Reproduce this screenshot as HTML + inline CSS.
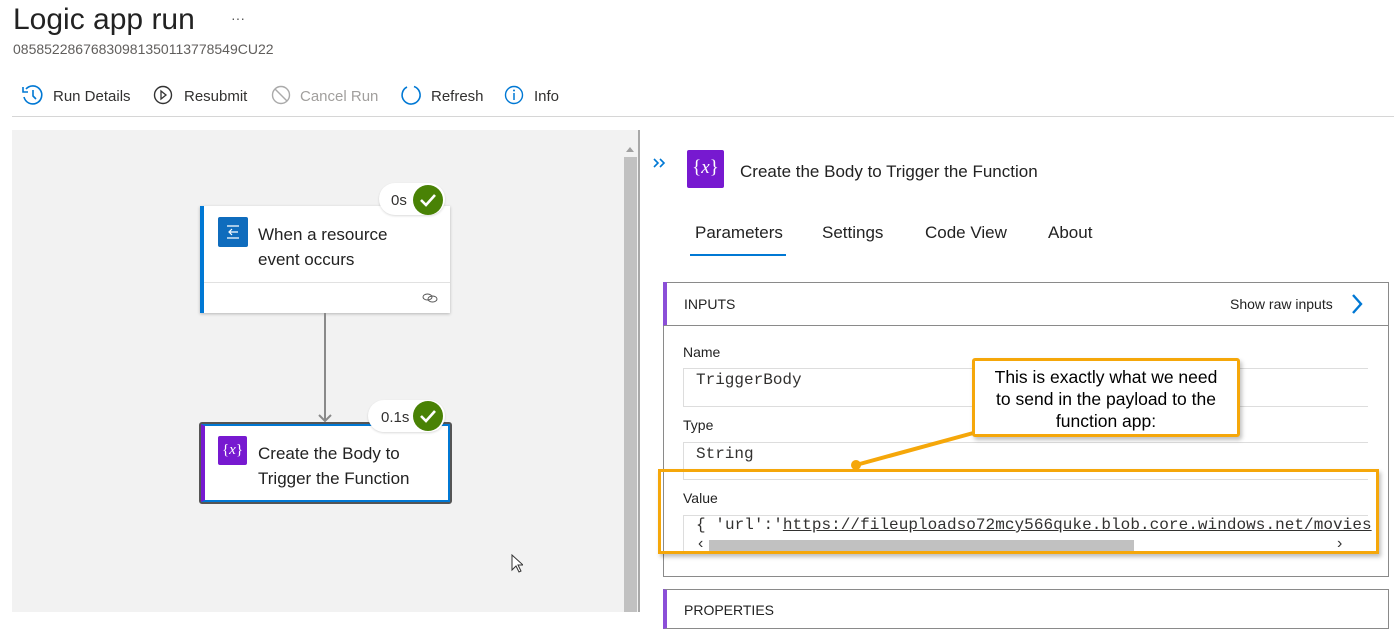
<!DOCTYPE html>
<html><head><meta charset="utf-8"><style>
*{margin:0;padding:0;box-sizing:border-box}
body{width:1394px;height:612px;overflow:hidden;background:#fff;font-family:"Liberation Sans",sans-serif;color:#323130;position:relative}
.a{position:absolute}
.mono{font-family:"Liberation Mono",monospace}
</style></head><body>
<div class="a" style="left:13px;top:3px;font-size:30px;color:#222">Logic app run</div>
<div class="a" style="left:231px;top:10px;font-size:14px;color:#555">···</div>
<div class="a" style="left:13px;top:41px;font-size:14px;color:#605e5c">08585228676830981350113778549CU22</div>

<svg class="a" style="left:20px;top:84px" width="24" height="22" viewBox="0 0 24 22"><path d="M6 5A9 9 0 1 1 4 13" fill="none" stroke="#0078d4" stroke-width="1.6"/><path d="M3 3v5h5" fill="none" stroke="#0078d4" stroke-width="1.6"/><path d="M13 6v6l3 3" fill="none" stroke="#0078d4" stroke-width="1.6"/></svg>
<div class="a" style="left:53px;top:88px;font-size:15px">Run Details</div>
<svg class="a" style="left:152px;top:84px" width="22" height="22" viewBox="0 0 22 22"><circle cx="11" cy="11" r="8.5" fill="none" stroke="#333" stroke-width="1.4"/><path d="M9 7v8l5-4z" fill="none" stroke="#333" stroke-width="1.3"/></svg>
<div class="a" style="left:184px;top:88px;font-size:15px">Resubmit</div>
<svg class="a" style="left:270px;top:84px" width="22" height="22" viewBox="0 0 22 22"><circle cx="11" cy="11" r="8.5" fill="none" stroke="#aaa" stroke-width="1.4"/><path d="M5 5l12 12" stroke="#aaa" stroke-width="1.4"/></svg>
<div class="a" style="left:300px;top:88px;font-size:15px;color:#a19f9d">Cancel Run</div>
<svg class="a" style="left:399px;top:83px" width="24" height="24" viewBox="0 0 24 24"><path d="M8 4A9 9 0 1 0 15 3.5" fill="none" stroke="#0078d4" stroke-width="1.6"/></svg>
<div class="a" style="left:431px;top:88px;font-size:15px">Refresh</div>
<svg class="a" style="left:503px;top:84px" width="22" height="22" viewBox="0 0 22 22"><circle cx="11" cy="11" r="8.5" fill="none" stroke="#0078d4" stroke-width="1.4"/><path d="M11 9v7" stroke="#0078d4" stroke-width="1.5"/><circle cx="11" cy="6.5" r="1" fill="#0078d4"/></svg>
<div class="a" style="left:534px;top:88px;font-size:15px">Info</div>
<div class="a" style="left:12px;top:116px;width:1382px;height:1px;background:#d6d6d6"></div>

<div class="a" style="left:12px;top:130px;width:626px;height:482px;background:#f2f2f2"></div>
<div class="a" style="left:624px;top:157px;width:13px;height:455px;background:#c1c1c1"></div>
<div class="a" style="left:626px;top:147px;width:0;height:0;border-left:4px solid transparent;border-right:4px solid transparent;border-bottom:5px solid #a0a0a0"></div>
<div class="a" style="left:638px;top:130px;width:2px;height:482px;background:#a8a8a8"></div>

<div class="a" style="left:200px;top:206px;width:250px;height:107px;background:#fff;border-left:4px solid #0078d4;box-shadow:0 1px 3px rgba(0,0,0,.25)"></div>
<div class="a" style="left:204px;top:282px;width:246px;height:1px;background:#e1e1e1"></div>
<div class="a" style="left:218px;top:217px;width:30px;height:30px;background:#0f6cbd;border-radius:2px"></div>
<svg class="a" style="left:218px;top:217px" width="30" height="30"><path d="M9 9h12M9 21h12M12 15h8M14 12l-3 3 3 3" fill="none" stroke="#fff" stroke-width="1.2"/></svg>
<div class="a" style="left:258px;top:222px;font-size:17px;line-height:25px;color:#222">When a resource<br>event occurs</div>
<svg class="a" style="left:422px;top:292px" width="16" height="12"><ellipse cx="5.5" cy="5" rx="4.5" ry="3" fill="none" stroke="#555"/><ellipse cx="10.5" cy="7" rx="4.5" ry="3" fill="none" stroke="#555"/></svg>
<div class="a" style="left:379px;top:183px;width:66px;height:32px;background:#fff;border-radius:16px;box-shadow:0 1px 2px rgba(0,0,0,.15)"></div>
<div class="a" style="left:391px;top:192px;font-size:15px">0s</div>
<svg class="a" style="left:412px;top:184px" width="32" height="32"><circle cx="16" cy="16" r="15" fill="#498205"/><path d="M9 16l5 5 9-10" fill="none" stroke="#fff" stroke-width="2.6"/></svg>

<div class="a" style="left:324px;top:313px;width:2px;height:107px;background:#8a8a8a"></div>
<svg class="a" style="left:318px;top:413px" width="14" height="10"><path d="M1 2l6 6 6-6" fill="none" stroke="#8a8a8a" stroke-width="2"/></svg>

<div class="a" style="left:199px;top:422px;width:253px;height:82px;background:#fff;border:2px solid #555;border-radius:3px"></div>
<div class="a" style="left:201px;top:424px;width:249px;height:78px;border:2px solid #0078d4;border-left:4px solid #7719d0"></div>
<div class="a" style="left:218px;top:436px;width:29px;height:29px;background:#7719d0;border-radius:2px;color:#fff;font-family:'Liberation Serif',serif;font-size:15px;text-align:center;line-height:28px">{<i>x</i>}</div>
<div class="a" style="left:258px;top:441px;font-size:17px;line-height:25px;color:#222">Create the Body to<br>Trigger the Function</div>
<div class="a" style="left:368px;top:400px;width:77px;height:32px;background:#fff;border-radius:16px;box-shadow:0 1px 2px rgba(0,0,0,.15)"></div>
<div class="a" style="left:381px;top:409px;font-size:15px">0.1s</div>
<svg class="a" style="left:412px;top:400px" width="32" height="32"><circle cx="16" cy="16" r="15" fill="#498205"/><path d="M9 16l5 5 9-10" fill="none" stroke="#fff" stroke-width="2.6"/></svg>
<svg class="a" style="left:511px;top:554px" width="12" height="20"><path d="M1 1v15l4-4 3 6 2-1-3-6h5z" fill="#fff" stroke="#333"/></svg>

<svg class="a" style="left:652px;top:157px" width="16" height="12"><path d="M2 2l4 4-4 4M8 2l4 4-4 4" fill="none" stroke="#0078d4" stroke-width="1.6"/></svg>
<div class="a" style="left:687px;top:150px;width:37px;height:38px;background:#7719d0;border-radius:2px;color:#fff;font-family:'Liberation Serif',serif;font-size:19px;text-align:center;line-height:36px">{<i>x</i>}</div>
<div class="a" style="left:740px;top:162px;font-size:17px;color:#222">Create the Body to Trigger the Function</div>
<div class="a" style="left:695px;top:223px;font-size:17px;color:#222">Parameters</div>
<div class="a" style="left:822px;top:223px;font-size:17px;color:#222">Settings</div>
<div class="a" style="left:925px;top:223px;font-size:17px;color:#222">Code View</div>
<div class="a" style="left:1048px;top:223px;font-size:17px;color:#222">About</div>
<div class="a" style="left:690px;top:254px;width:96px;height:2px;background:#0078d4"></div>

<div class="a" style="left:663px;top:282px;width:726px;height:295px;border:1px solid #8a8a8a"></div>
<div class="a" style="left:663px;top:282px;width:4px;height:44px;background:#8b4fd8"></div>
<div class="a" style="left:664px;top:325px;width:725px;height:1px;background:#8a8a8a"></div>
<div class="a" style="left:684px;top:296px;font-size:14px;color:#222">INPUTS</div>
<div class="a" style="left:1230px;top:296px;font-size:14px;color:#222">Show raw inputs</div>
<svg class="a" style="left:1350px;top:292px" width="14" height="24"><path d="M3 3l8 9-8 9" fill="none" stroke="#0078d4" stroke-width="2.4"/></svg>

<div class="a" style="left:683px;top:344px;font-size:14px;color:#222">Name</div>
<div class="a" style="left:683px;top:368px;width:685px;height:39px;border:1px solid #ddd;border-right:none"></div>
<div class="a mono" style="left:696px;top:371px;font-size:16px">TriggerBody</div>
<div class="a" style="left:683px;top:417px;font-size:14px;color:#222">Type</div>
<div class="a" style="left:683px;top:442px;width:685px;height:38px;border:1px solid #ddd;border-right:none"></div>
<div class="a mono" style="left:696px;top:445px;font-size:16px">String</div>
<div class="a" style="left:683px;top:490px;font-size:14px;color:#222">Value</div>
<div class="a" style="left:683px;top:515px;width:685px;height:38px;border-top:1px solid #ddd;border-left:1px solid #ddd"></div>
<div class="a mono" style="left:696px;top:516px;font-size:16px;white-space:nowrap;letter-spacing:0.05px">{ 'url':'<span style="text-decoration:underline">https://fileuploadso72mcy566quke.blob.core.windows.net/movies</span></div>
<div class="a" style="left:709px;top:540px;width:425px;height:11px;background:#c1c1c1"></div>
<div class="a" style="left:698px;top:535px;font-size:16px;color:#333">‹</div>
<div class="a" style="left:1337px;top:535px;font-size:16px;color:#333">›</div>

<div class="a" style="left:663px;top:589px;width:726px;height:40px;border:1px solid #8a8a8a;border-left:4px solid #8b4fd8"></div>
<div class="a" style="left:684px;top:602px;font-size:14px;color:#222">PROPERTIES</div>

<div class="a" style="left:658px;top:469px;width:721px;height:85px;border:3px solid #f5a70a;box-shadow:2px 3px 4px rgba(0,0,0,.25)"></div>
<svg class="a" style="left:840px;top:420px" width="150" height="60"><path d="M16 45L137 12" stroke="#f5a70a" stroke-width="4" stroke-linecap="round"/><circle cx="16" cy="45" r="5" fill="#f5a70a"/></svg>
<div class="a" style="left:972px;top:358px;width:268px;height:79px;background:#fff;border:3px solid #f5a70a;border-radius:3px;box-shadow:2px 3px 4px rgba(0,0,0,.25);text-align:center;font-size:17.5px;line-height:22px;color:#000;padding-top:5px">This is exactly what we need<br>to send in the payload to the<br>function app:</div>
</body></html>
